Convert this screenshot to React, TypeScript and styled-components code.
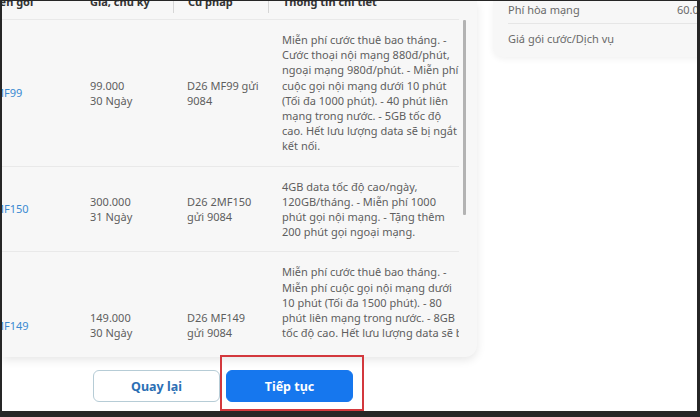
import React from 'react';
import styled, { createGlobalStyle } from 'styled-components';

const GlobalStyle = createGlobalStyle`
  html, body { margin: 0; padding: 0; background: #fff; }
  body { font-family: "Noto Sans", "Open Sans", sans-serif; }
  * { box-sizing: border-box; }
`;

const Frame = styled.div`
  width: 700px;
  height: 417px;
  border-style: solid;
  border-color: #262626;
  border-width: 1px 3px 6px 2px;
  background: #fff;
  overflow: hidden;
  display: flex;
  flex-direction: column;
`;

const TopRow = styled.div`
  display: flex;
  align-items: flex-start;
  gap: 16px;
`;

const PlanCard = styled.section`
  width: 475px;
  height: 356px;
  flex-shrink: 0;
  background: #f7f7f7;
  border-radius: 0 0 12px 0;
  box-shadow: 0 3px 10px rgba(0, 0, 0, 0.1);
  display: flex;
  overflow: hidden;
`;

const TableViewport = styled.div`
  width: 457px;
  height: 341px;
  overflow: hidden;
  flex-shrink: 0;
`;

const Table = styled.div`
  width: 479px;
  margin-left: -22px;
  margin-top: -11px;
`;

const Row = styled.div<{ $head?: boolean }>`
  display: grid;
  grid-template-columns: 96px 97px 95px 1fr;
  align-items: ${(p) => (p.$head ? 'end' : 'center')};
  height: ${(p) => (p.$head ? '29px' : 'auto')};
  border-top: ${(p) => (p.$head ? 'none' : '1px solid #e9e9e9')};
`;

const HeadCell = styled.div<{ $divider?: boolean }>`
  height: 23px;
  padding: 4px 14px 0;
  font-size: 11px;
  line-height: 15px;
  font-weight: 700;
  color: #333;
  white-space: nowrap;
  border-left: ${(p) => (p.$divider ? '1px solid #d6d6d6' : 'none')};
  align-self: start;
`;

const Cell = styled.div`
  padding: 12px 14px;
  font-size: 11px;
  line-height: 15.2px;
  color: #5e5e5e;
`;

const NameCell = styled(Cell)`
  color: #3a8ad2;
  padding-left: 14px;
`;

const Line = styled.span`
  display: block;
  white-space: nowrap;
`;

const ScrollTrack = styled.div`
  width: 10px;
  padding-top: 19px;
  display: flex;
  justify-content: center;
`;

const ScrollThumb = styled.div`
  width: 3px;
  height: 195px;
  background: #b3b3b3;
  border-radius: 1px;
`;

const SummaryCard = styled.aside`
  width: 260px;
  flex-shrink: 0;
  height: 56px;
  background: #f7f7f7;
  border-radius: 0 0 0 10px;
  box-shadow: 0 2px 6px rgba(0, 0, 0, 0.06);
  padding: 0 15px;
`;

const SummaryRow = styled.div<{ $first?: boolean }>`
  display: grid;
  grid-template-columns: 169px 1fr;
  font-size: 11px;
  line-height: 18px;
  color: #6a6a6a;
  white-space: nowrap;
  height: ${(p) => (p.$first ? '23px' : 'auto')};
  padding-top: ${(p) => (p.$first ? '0' : '6px')};
  border-bottom: ${(p) => (p.$first ? '1px solid #e6e6e6' : 'none')};
`;

const Actions = styled.div`
  display: flex;
  gap: 6px;
  margin-top: 13px;
  padding-left: 91px;
`;

const Button = styled.button<{ $primary?: boolean }>`
  width: 127px;
  height: 32px;
  border-radius: 6px;
  font-family: "Noto Sans", "Open Sans", sans-serif;
  font-size: 12.5px;
  font-weight: 700;
  cursor: pointer;
  border: 1px solid ${(p) => (p.$primary ? '#1677ee' : '#b6ccd6')};
  background: ${(p) => (p.$primary ? '#1677ee' : '#fff')};
  color: ${(p) => (p.$primary ? '#fff' : '#2c6fb4')};
`;

const Highlight = styled.div`
  position: relative;
  &::after {
    content: '';
    position: absolute;
    left: -6px;
    top: -15px;
    right: -11px;
    bottom: -9px;
    border: 2px solid #d3383d;
    pointer-events: none;
  }
`;

type Plan = {
  name: string;
  price: string;
  cycle: string;
  syntax: string[];
  detail: string[];
};

const plans: Plan[] = [
  {
    name: 'MF99',
    price: '99.000',
    cycle: '30 Ngày',
    syntax: ['D26 MF99 gửi', '9084'],
    detail: [
      'Miễn phí cước thuê bao tháng. -',
      'Cước thoại nội mạng 880đ/phút,',
      'ngoại mạng 980đ/phút. - Miễn phí',
      'cuộc gọi nội mạng dưới 10 phút',
      '(Tối đa 1000 phút). - 40 phút liên',
      'mạng trong nước. - 5GB tốc độ',
      'cao. Hết lưu lượng data sẽ bị ngắt',
      'kết nối.',
    ],
  },
  {
    name: 'MF150',
    price: '300.000',
    cycle: '31 Ngày',
    syntax: ['D26 2MF150', 'gửi 9084'],
    detail: [
      '4GB data tốc độ cao/ngày,',
      '120GB/tháng. - Miễn phí 1000',
      'phút gọi nội mạng. - Tặng thêm',
      '200 phút gọi ngoại mạng.',
    ],
  },
  {
    name: 'MF149',
    price: '149.000',
    cycle: '30 Ngày',
    syntax: ['D26 MF149', 'gửi 9084'],
    detail: [
      'Miễn phí cước thuê bao tháng. -',
      'Miễn phí cuộc gọi nội mạng dưới',
      '10 phút (Tối đa 1500 phút). - 80',
      'phút liên mạng trong nước. - 8GB',
      'tốc độ cao. Hết lưu lượng data sẽ bị',
      'ngắt kết nối. - Tặng 30 phút gọi',
      'ngoại mạng trong nước.',
      '',
    ],
  },
];

export default function App() {
  return (
    <>
      <GlobalStyle />
      <Frame>
        <TopRow>
          <PlanCard>
            <TableViewport>
              <Table>
                <Row $head>
                  <HeadCell>Tên gói</HeadCell>
                  <HeadCell>Giá, chu kỳ</HeadCell>
                  <HeadCell $divider>Cú pháp</HeadCell>
                  <HeadCell $divider>Thông tin chi tiết</HeadCell>
                </Row>
                {plans.map((p) => (
                  <Row key={p.name}>
                    <NameCell>{p.name}</NameCell>
                    <Cell>
                      <Line>{p.price}</Line>
                      <Line>{p.cycle}</Line>
                    </Cell>
                    <Cell>
                      {p.syntax.map((s, i) => (
                        <Line key={i}>{s}</Line>
                      ))}
                    </Cell>
                    <Cell>
                      {p.detail.map((d, i) => (
                        <Line key={i}>{d || '\u00a0'}</Line>
                      ))}
                    </Cell>
                  </Row>
                ))}
              </Table>
            </TableViewport>
            <ScrollTrack>
              <ScrollThumb />
            </ScrollTrack>
          </PlanCard>
          <SummaryCard>
            <SummaryRow $first>
              <span>Phí hòa mạng</span>
              <span>60.000 đ</span>
            </SummaryRow>
            <SummaryRow>
              <span>Giá gói cước/Dịch vụ</span>
              <span></span>
            </SummaryRow>
          </SummaryCard>
        </TopRow>
        <Actions>
          <Button>Quay lại</Button>
          <Highlight>
            <Button $primary>Tiếp tục</Button>
          </Highlight>
        </Actions>
      </Frame>
    </>
  );
}
